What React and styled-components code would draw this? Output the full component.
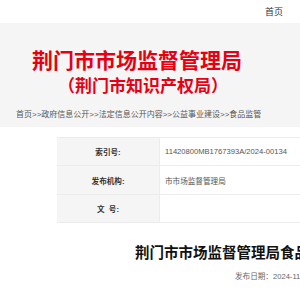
import React from "react";
import styled, { createGlobalStyle } from "styled-components";

const GlobalStyle = createGlobalStyle`
  html, body {
    margin: 0;
    padding: 0;
    overflow: hidden;
    background: #ffffff;
  }
  body {
    font-family: "Liberation Sans", "Noto Sans CJK SC", sans-serif;
    color: #333;
  }
`;

const Page = styled.div`
  width: 300px;
  overflow: hidden;
`;

const TopBar = styled.div`
  height: 23px;
  display: flex;
  align-items: center;
  justify-content: flex-end;
  padding-right: 17px;
  font-size: 9px;
  color: #333;
`;

const GrayBand = styled.div`
  background: #f5f5f5;
`;

const Masthead = styled.div`
  padding: 26px 0 7px 32px;
  display: flex;
  flex-direction: column;
  gap: 6px;
`;

const SiteTitle = styled.div`
  font-size: 21px;
  line-height: 21px;
  font-weight: 700;
  color: #e60012;
  white-space: nowrap;
  font-family: "Noto Sans CJK SC", sans-serif;
`;

const SiteSubtitle = styled.div`
  font-size: 17px;
  line-height: 17px;
  font-weight: 700;
  color: #e60012;
  margin-left: 26px;
  white-space: nowrap;
  font-family: "Noto Sans CJK SC", sans-serif;
`;

const Breadcrumb = styled.div`
  height: 27px;
  display: flex;
  align-items: center;
  padding-left: 16px;
  font-size: 8px;
  color: #555;
  white-space: nowrap;
`;

const Content = styled.div`
  margin-left: 57px;
  padding-top: 10px;
  width: 700px;
`;

const InfoTable = styled.div`
  display: grid;
  grid-template-columns: 103px 1fr;
  border-top: 1px solid #ececec;
`;

const Label = styled.div`
  height: ${(p) => p.$h}px;
  display: flex;
  align-items: center;
  justify-content: center;
  background: #f5f5f5;
  border-bottom: 1px solid #ececec;
  border-right: 1px solid #ececec;
  font-size: 7.6px;
  font-weight: 700;
  color: #333;
  white-space: pre;
`;

const Value = styled.div`
  height: ${(p) => p.$h}px;
  display: flex;
  align-items: center;
  padding-left: 5px;
  border-bottom: 1px solid #ececec;
  font-size: 7.6px;
  color: #555;
  white-space: nowrap;
`;

const ArticleTitle = styled.div`
  margin-top: 21px;
  padding-left: 78px;
  font-size: 14.5px;
  line-height: 16px;
  font-weight: 700;
  color: #111;
  white-space: nowrap;
  font-family: "Noto Sans CJK SC", sans-serif;
`;

const DateLine = styled.div`
  margin-top: 12px;
  padding-left: 178px;
  font-size: 7.6px;
  line-height: 10px;
  color: #666;
  white-space: nowrap;
`;

const Divider = styled.div`
  margin-top: 18px;
  border-bottom: 1px dotted #cfcfcf;
`;

const rows = [
  { label: "索引号:", value: "11420800MB1767393A/2024-00134", h: 27 },
  { label: "发布机构:", value: "市市场监督管理局", h: 28 },
  { label: "文  号:", value: "", h: 27 },
];

export default function App() {
  return (
    <Page>
      <GlobalStyle />
      <TopBar>首页</TopBar>
      <GrayBand>
        <Masthead>
          <SiteTitle>荆门市市场监督管理局</SiteTitle>
          <SiteSubtitle>（荆门市知识产权局）</SiteSubtitle>
        </Masthead>
        <Breadcrumb>
          首页&gt;&gt;政府信息公开&gt;&gt;法定信息公开内容&gt;&gt;公益事业建设&gt;&gt;食品监管
        </Breadcrumb>
      </GrayBand>
      <Content>
        <InfoTable>
          {rows.map((r) => (
            <React.Fragment key={r.label}>
              <Label $h={r.h}>{r.label}</Label>
              <Value $h={r.h}>{r.value}</Value>
            </React.Fragment>
          ))}
        </InfoTable>
        <ArticleTitle>荆门市市场监督管理局食品安全监督抽检信息公告</ArticleTitle>
        <DateLine>发布日期：2024-11-15</DateLine>
        <Divider />
      </Content>
    </Page>
  );
}
